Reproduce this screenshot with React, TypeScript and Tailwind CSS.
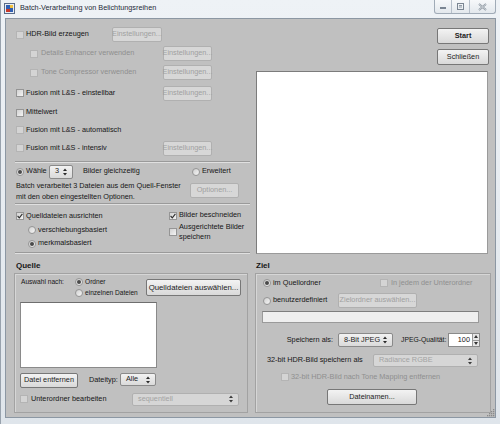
import React from "react";

type P = { children?: React.ReactNode; className?: string; disabled?: boolean };

function Check({ checked, disabled }: { checked?: boolean; disabled?: boolean }) {
  return (
    <span
      className={`flex h-[8px] w-[8px] shrink-0 items-center justify-center border ${
        disabled
          ? "border-[#b4b4b4] bg-[#d4d4d4]"
          : "border-[#959595] bg-gradient-to-br from-[#d2d2d2] to-[#f4f4f4]"
      }`}
    >
      {checked && (
        <svg width="6" height="6" viewBox="0 0 6 6">
          <path d="M0.6 3 L2.3 4.8 L5.4 0.8" stroke="#2e2e2e" strokeWidth="1.1" fill="none" />
        </svg>
      )}
    </span>
  );
}

function Radio({ on }: { on?: boolean }) {
  return (
    <span className="flex h-[8px] w-[8px] shrink-0 items-center justify-center rounded-full border border-[#959595] bg-gradient-to-br from-[#d0d0d0] to-[#f6f6f6]">
      {on && <span className="h-[4px] w-[4px] rounded-full bg-[#4a4a4a]" />}
    </span>
  );
}

function Btn({ children, className = "", disabled }: P) {
  return (
    <div
      className={`flex shrink-0 items-center justify-center rounded-[2px] border ${
        disabled
          ? "border-[#b0b0b0] bg-[#d7d7d7] text-[#a0a0a0]"
          : "border-[#777777] bg-gradient-to-b from-[#f3f3f3] to-[#d9d9d9] text-[#1c1c1c]"
      } ${className}`}
    >
      {children}
    </div>
  );
}

function UpDown({ color = "#2a2a2a" }: { color?: string }) {
  return (
    <svg width="4" height="8" viewBox="0 0 4 8" className="shrink-0">
      <path d="M2 0.5 L4 3 H0Z M0 5 H4 L2 7.5Z" fill={color} />
    </svg>
  );
}

function Select({ children, className = "", disabled }: P) {
  return (
    <div
      className={`flex shrink-0 items-center justify-between rounded-[2px] border pl-[5px] pr-[5px] ${
        disabled
          ? "border-[#b0b0b0] bg-[#d6d6d6] text-[#a3a3a3]"
          : "border-[#8a8a8a] bg-gradient-to-b from-[#f2f2f2] to-[#dadada] text-[#1c1c1c]"
      } ${className}`}
    >
      <span>{children}</span>
      <UpDown color={disabled ? "#3a3a3a" : "#2a2a2a"} />
    </div>
  );
}

function Sep() {
  return <div className="ml-[1px] border-t border-b border-t-[#9a9a9a] border-b-[#e0e0e0]" />;
}

const dis = "text-[#8f8f8f]";

export default function App() {
  return (
    <div className="relative h-[424px] w-[500px] overflow-hidden whitespace-nowrap border-l border-[#98a2ad] bg-gradient-to-b from-[#eef2f6] to-[#dfe5eb] font-['Liberation_Sans',Arial,sans-serif] text-[7.3px] text-[#161616]">
      {/* title bar */}
      <div className="flex h-[18px] items-start">
        <div className="flex h-[17px] items-center pl-[3px]">
          <svg width="11" height="11" viewBox="0 0 11 11">
            <rect x="0.5" y="0.5" width="10" height="10" fill="#e8eef5" stroke="#5a6d8a" />
            <rect x="2" y="2" width="7" height="7" fill="#2f5fb3" />
            <rect x="2" y="6" width="4" height="3" fill="#c83a2a" />
            <rect x="6" y="2" width="3" height="3" fill="#f0c040" />
          </svg>
          <span className="ml-[5px] text-[#1e2a38]">Batch-Verarbeitung von Belichtungsreihen</span>
        </div>
        <div className="ml-auto mr-[4px] flex h-[14px] overflow-hidden rounded-b-[3px] border border-t-0 border-[#a0abb7] bg-gradient-to-b from-[#f6f8fa] to-[#e3e8ed]">
          <div className="flex w-[16px] items-end justify-center pb-[4px]">
            <span className="h-[2px] w-[6px] border border-[#7a8592]" />
          </div>
          <div className="flex w-[18px] items-center justify-center border-l border-[#b6bfca]">
            <svg width="7" height="7" viewBox="0 0 7 7">
              <rect x="0.5" y="0.5" width="6" height="6" fill="none" stroke="#7a8592" />
              <path d="M2 2.5 H5 M2 4 H5" stroke="#7a8592" strokeWidth="0.8" />
            </svg>
          </div>
          <div className="flex w-[26px] items-center justify-center border-l border-[#b6bfca]">
            <svg width="9" height="8" viewBox="0 0 9 8">
              <path d="M1 1 L8 7 M8 1 L1 7" stroke="#8a949f" strokeWidth="1.8" />
              <path d="M1 1 L8 7 M8 1 L1 7" stroke="#f3f5f7" strokeWidth="0.6" />
            </svg>
          </div>
        </div>
      </div>

      {/* client area */}
      <div className="relative ml-[4px] flex h-[400px] w-[491px] border border-[#8c97a3] bg-[#c0c0c0] pl-[8px]">
        {/* left column */}
        <div className="flex w-[236px] flex-col pt-[6px]">
          <div className="flex h-[19px] items-center">
            <div className="flex w-[98px] items-center pl-[2px]">
              <Check disabled />
              <span className="ml-[2px]">HDR-Bild erzeugen</span>
            </div>
            <Btn disabled className="h-[15px] w-[50px]">Einstellungen...</Btn>
          </div>
          <div className="flex h-[19px] items-center">
            <div className="flex w-[149px] items-center pl-[16px]">
              <Check disabled />
              <span className={`ml-[3px] ${dis}`}>Details Enhancer verwenden</span>
            </div>
            <Btn disabled className="h-[15px] w-[49px]">Einstellungen...</Btn>
          </div>
          <div className="flex h-[19px] items-center">
            <div className="flex w-[149px] items-center pl-[16px]">
              <Check disabled />
              <span className={`ml-[3px] ${dis}`}>Tone Compressor verwenden</span>
            </div>
            <Btn disabled className="h-[15px] w-[49px]">Einstellungen...</Btn>
          </div>
          <div className="flex h-[22px] items-center">
            <div className="flex w-[149px] items-center pl-[2px]">
              <Check />
              <span className="ml-[2px]">Fusion mit L&amp;S - einstellbar</span>
            </div>
            <Btn disabled className="h-[15px] w-[49px]">Einstellungen...</Btn>
          </div>
          <div className="flex h-[17px] items-center pl-[2px]">
            <Check />
            <span className="ml-[2px]">Mittelwert</span>
          </div>
          <div className="flex h-[18px] items-center pl-[2px]">
            <Check disabled />
            <span className="ml-[2px]">Fusion mit L&amp;S - automatisch</span>
          </div>
          <div className="flex h-[18px] items-center">
            <div className="flex w-[149px] items-center pl-[2px]">
              <Check disabled />
              <span className="ml-[2px]">Fusion mit L&amp;S - intensiv</span>
            </div>
            <Btn disabled className="h-[15px] w-[49px]">Einstellungen...</Btn>
          </div>
          <div className="mt-[4px]">
            <Sep />
          </div>
          <div className="mt-[1px] flex h-[15px] items-center pl-[2px]">
            <Radio on />
            <span className="ml-[2px] w-[23px]">Wähle</span>
            <Select className="h-[14px] w-[24px]">3</Select>
            <span className="ml-[10px] w-[109px]">Bilder gleichzeitig</span>
            <Radio />
            <span className="ml-[2px]">Erweitert</span>
          </div>
          <div className="flex h-[23px] items-center pl-[2px]">
            <div className="w-[174px] leading-[11px]">
              Batch verarbeitet 3 Dateien aus dem Quell-Fenster
              <br />
              mit den oben eingestellten Optionen.
            </div>
            <Btn disabled className="h-[15px] w-[49px]">Optionen...</Btn>
          </div>
          <div className="mt-[1px]">
            <Sep />
          </div>
          <div className="mt-[4px] flex">
            <div className="flex w-[155px] flex-col">
              <div className="flex h-[14px] items-center pl-[2px]">
                <Check checked />
                <span className="ml-[2px]">Quelldateien ausrichten</span>
              </div>
              <div className="flex h-[14px] items-center pl-[14px]">
                <Radio />
                <span className="ml-[2px]">verschiebungsbasiert</span>
              </div>
              <div className="flex h-[13px] items-center pl-[14px]">
                <Radio on />
                <span className="ml-[2px]">merkmalsbasiert</span>
              </div>
            </div>
            <div className="flex flex-col">
              <div className="flex h-[13px] items-center">
                <Check checked />
                <span className="ml-[2px]">Bilder beschneiden</span>
              </div>
              <div className="flex items-center">
                <Check />
                <span className="ml-[2px] leading-[10px]">
                  Ausgerichtete Bilder
                  <br />
                  speichern
                </span>
              </div>
            </div>
          </div>
          <div className="mt-[2px]">
            <Sep />
          </div>
          <div className="flex h-[19px] items-center pl-[2px] pt-[4px] text-[8px] font-bold">Quelle</div>
          <div className="flex h-[140px] w-[234px] flex-col border border-[#a2a2a2] shadow-[inset_1px_1px_0_#d6d6d6]">
            <div className="flex items-start pt-[2px]">
              <div className="flex h-[11px] w-[60px] items-center pl-[6px] text-[6.6px]">Auswahl nach:</div>
              <div className="flex w-[71px] flex-col text-[6.6px]">
                <div className="flex h-[11px] items-center">
                  <Radio on />
                  <span className="ml-[2px]">Ordner</span>
                </div>
                <div className="flex h-[11px] items-center">
                  <Radio />
                  <span className="ml-[2px]">einzelnen Dateien</span>
                </div>
              </div>
              <Btn className="mt-[3px] h-[17px] w-[95px] text-[7.8px]">Quelldateien auswählen...</Btn>
            </div>
            <div className="ml-[5px] mt-[4px] h-[66px] w-[137px] border border-[#8a8a8a] border-t-[#6e6e6e] bg-white" />
            <div className="mt-[5px] flex items-start">
              <Btn className="ml-[5px] h-[15px] w-[58px]">Datei entfernen</Btn>
              <span className="ml-[11px] mt-[2px] w-[31px]">Dateityp:</span>
              <Select className="h-[13px] w-[36px]">Alle</Select>
            </div>
            <div className="mt-[4px] flex h-[14px] items-center">
              <span className="ml-[5px]">
                <Check disabled />
              </span>
              <span className="ml-[3px] w-[101px]">Unterordner bearbeiten</span>
              <Select disabled className="h-[13px] w-[107px]">sequentiell</Select>
            </div>
          </div>
        </div>

        {/* right column */}
        <div className="ml-[5px] flex w-[236px] flex-col">
          <Btn className="mr-[2px] mt-[9px] h-[16px] w-[52px] self-end font-bold">Start</Btn>
          <Btn className="mr-[2px] mt-[5px] h-[16px] w-[52px] self-end">Schließen</Btn>
          <div className="ml-[1px] mt-[6px] h-[183px] w-[232px] border border-[#9a9a9a] border-l-[#7c7c7c] border-t-[#7c7c7c] bg-white" />
          <div className="flex h-[19px] items-center pl-[1px] pt-[4px] text-[8px] font-bold">Ziel</div>
          <div className="flex h-[140px] w-[236px] flex-col border border-[#a2a2a2] shadow-[inset_1px_1px_0_#d6d6d6]">
            <div className="flex h-[18px] items-center pl-[7px]">
              <Radio on />
              <span className="ml-[2px] w-[107px]">im Quellordner</span>
              <Check disabled />
              <span className={`ml-[3px] ${dis}`}>In jedem der Unterordner</span>
            </div>
            <div className="flex h-[17px] items-center pl-[7px]">
              <Radio />
              <span className="ml-[2px] w-[65px]">benutzerdefiniert</span>
              <Btn disabled className="h-[15px] w-[79px]">Zielordner auswählen...</Btn>
            </div>
            <div className="ml-[6px] mt-[2px] h-[12px] w-[217px] border border-[#9a9a9a] border-t-[#7e7e7e] bg-[#efefef]" />
            <div className="mt-[10px] flex h-[14px] items-center">
              <span className="w-[77px] text-right">Speichern als:</span>
              <Select className="ml-[5px] h-[14px] w-[55px]">8-Bit JPEG</Select>
              <span className="ml-[8px] w-[47px] text-[6.8px]">JPEG-Qualität:</span>
              <div className="flex h-[14px] w-[32px] items-center justify-end border border-[#8a8a8a] bg-white">
                <span className="mr-[2px]">100</span>
                <div className="flex h-full w-[7px] flex-col border-l border-[#9a9a9a] bg-[#e6e6e6]">
                  <div className="flex flex-1 items-center justify-center border-b border-[#9a9a9a]">
                    <svg width="4" height="3" viewBox="0 0 4 3"><path d="M2 0 L4 3 H0Z" fill="#333" /></svg>
                  </div>
                  <div className="flex flex-1 items-center justify-center">
                    <svg width="4" height="3" viewBox="0 0 4 3"><path d="M0 0 H4 L2 3Z" fill="#333" /></svg>
                  </div>
                </div>
              </div>
            </div>
            <div className="mt-[7px] flex h-[13px] items-center pl-[11px]">
              <span className="w-[106px]">32-bit HDR-Bild speichern als</span>
              <Select disabled className="h-[13px] w-[105px]">Radiance RGBE</Select>
            </div>
            <div className="flex h-[20px] items-center pl-[25px]">
              <Check disabled />
              <span className={`ml-[2px] ${dis}`}>32-bit HDR-Bild nach Tone Mapping entfernen</span>
            </div>
            <Btn className="ml-[71px] mt-[2px] h-[16px] w-[90px]">Dateinamen...</Btn>
          </div>
        </div>

        {/* resize grip */}
        <svg className="absolute bottom-[0px] right-[0px]" width="9" height="9" viewBox="0 0 9 9">
          <g fill="#8a8a8a">
            <rect x="7" y="1" width="1.3" height="1.3" />
            <rect x="5" y="3" width="1.3" height="1.3" />
            <rect x="7" y="3" width="1.3" height="1.3" />
            <rect x="3" y="5" width="1.3" height="1.3" />
            <rect x="5" y="5" width="1.3" height="1.3" />
            <rect x="7" y="5" width="1.3" height="1.3" />
            <rect x="1" y="7" width="1.3" height="1.3" />
            <rect x="3" y="7" width="1.3" height="1.3" />
            <rect x="5" y="7" width="1.3" height="1.3" />
            <rect x="7" y="7" width="1.3" height="1.3" />
          </g>
        </svg>
      </div>
    </div>
  );
}
